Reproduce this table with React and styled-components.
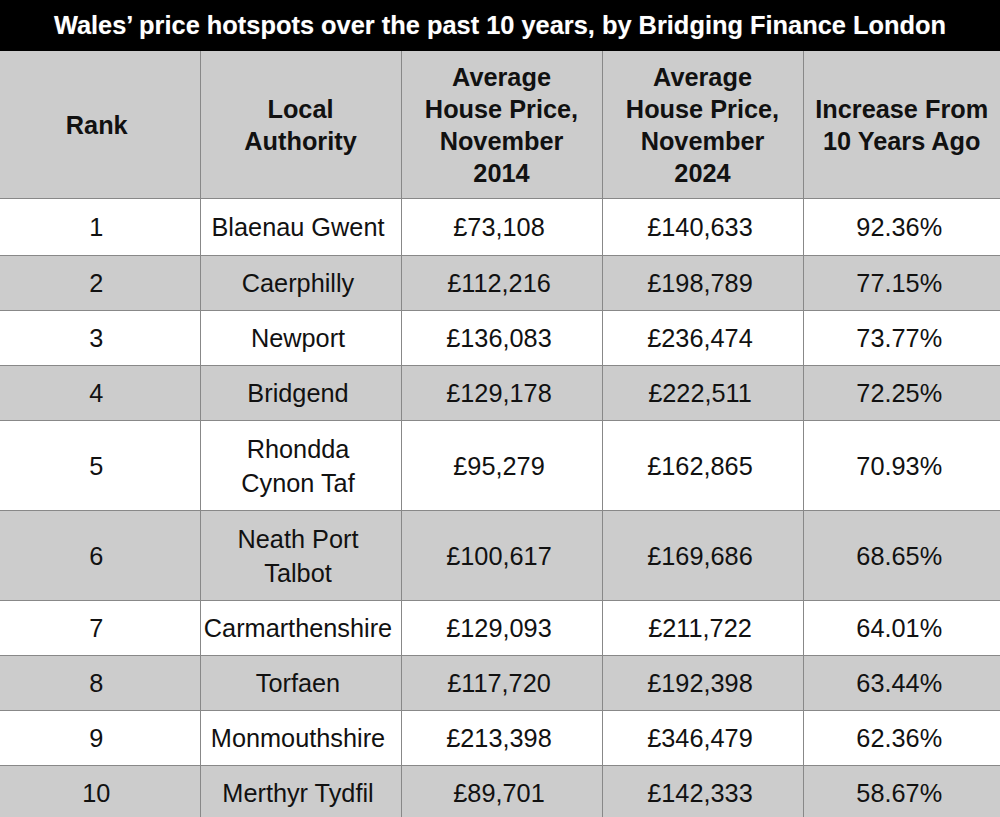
import React from 'react';
import styled, { createGlobalStyle } from 'styled-components';

const GlobalStyle = createGlobalStyle`
  html, body {
    margin: 0;
    padding: 0;
    background: #ffffff;
    font-family: "Liberation Sans", Arial, sans-serif;
  }
`;

const Page = styled.div`
  width: 1000px;
  height: 817px;
  overflow: hidden;
`;

const TitleBar = styled.div`
  height: 51px;
  background: #000000;
  color: #ffffff;
  display: flex;
  align-items: center;
  justify-content: center;
  font-size: 25.4px;
  font-weight: 700;
  text-shadow: 0 0 1px #555;
`;

const Table = styled.table`
  width: 1000px;
  border-collapse: collapse;
  table-layout: fixed;
`;

const Col = styled.col`
  width: ${props => props.w}px;
`;

const HeadCell = styled.th`
  height: ${props => props.h}px;
  padding: 0 2px;
  background: #cccccc;
  color: #111111;
  font-size: 25.3px;
  font-weight: 700;
  line-height: 32px;
  text-align: center;
  vertical-align: middle;
  border-left: 1px solid #888888;
  border-bottom: 1px solid #888888;
  &:first-child {
    border-left: none;
    padding-right: 8px;
  }
`;

const Cell = styled.td`
  height: ${props => props.h}px;
  padding: 0 5px 0 0;
  background: ${props => (props.shade ? '#cccccc' : '#ffffff')};
  color: #111111;
  font-size: 25.3px;
  line-height: 34px;
  text-align: center;
  vertical-align: middle;
  border-left: 1px solid #888888;
  border-bottom: 1px solid #888888;
  white-space: nowrap;
  &:first-child {
    border-left: none;
    padding-right: 7px;
  }
`;

const rows = [
  ['1', ['Blaenau Gwent'], '£73,108', '£140,633', '92.36%', 56],
  ['2', ['Caerphilly'], '£112,216', '£198,789', '77.15%', 54],
  ['3', ['Newport'], '£136,083', '£236,474', '73.77%', 54],
  ['4', ['Bridgend'], '£129,178', '£222,511', '72.25%', 54],
  ['5', ['Rhondda', 'Cynon Taf'], '£95,279', '£162,865', '70.93%', 89],
  ['6', ['Neath Port', 'Talbot'], '£100,617', '£169,686', '68.65%', 89],
  ['7', ['Carmarthenshire'], '£129,093', '£211,722', '64.01%', 54],
  ['8', ['Torfaen'], '£117,720', '£192,398', '63.44%', 54],
  ['9', ['Monmouthshire'], '£213,398', '£346,479', '62.36%', 54],
  ['10', ['Merthyr Tydfil'], '£89,701', '£142,333', '58.67%', 54],
];

const headers = [
  ['Rank'],
  ['Local', 'Authority'],
  ['Average', 'House Price,', 'November', '2014'],
  ['Average', 'House Price,', 'November', '2024'],
  ['Increase From', '10 Years Ago'],
];

const colWidths = [200, 201, 201, 201, 197];

function Lines({ parts }) {
  return parts.map((p, i) => (
    <React.Fragment key={i}>
      {i > 0 && <br />}
      {p}
    </React.Fragment>
  ));
}

export default function App() {
  return (
    <Page>
      <GlobalStyle />
      <TitleBar>Wales’ price hotspots over the past 10 years, by Bridging Finance London</TitleBar>
      <Table>
        <colgroup>
          {colWidths.map((w, i) => <Col key={i} w={w} />)}
        </colgroup>
        <thead>
          <tr>
            {headers.map((h, i) => (
              <HeadCell key={i} h={147}>
                <Lines parts={h} />
              </HeadCell>
            ))}
          </tr>
        </thead>
        <tbody>
          {rows.map((r, i) => {
            const shade = i % 2 === 1;
            return (
              <tr key={r[0]}>
                <Cell h={r[5]} shade={shade}>{r[0]}</Cell>
                <Cell h={r[5]} shade={shade}><Lines parts={r[1]} /></Cell>
                <Cell h={r[5]} shade={shade}>{r[2]}</Cell>
                <Cell h={r[5]} shade={shade}>{r[3]}</Cell>
                <Cell h={r[5]} shade={shade}>{r[4]}</Cell>
              </tr>
            );
          })}
        </tbody>
      </Table>
    </Page>
  );
}
